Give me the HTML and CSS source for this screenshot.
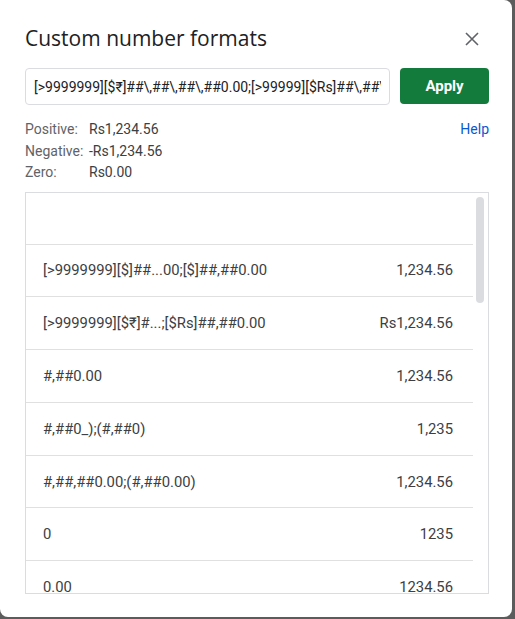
FILE: index.html
```html
<!DOCTYPE html>
<html>
<head>
<meta charset="utf-8">
<link rel="stylesheet" href="styles.css">
</head>
<body>
<div class="dialog">
  <div class="header">
    <div class="title">Custom number formats</div>
    <svg class="close" width="14" height="14" viewBox="0 0 14 14"><path d="M1 1L13 13M13 1L1 13" stroke="#5f6368" stroke-width="1.6" fill="none"/></svg>
  </div>
  <div class="inputrow">
    <div class="input"><span>[&gt;9999999][$₹]##\,##\,##\,##0.00;[&gt;99999][$Rs]##\,##\,##0.00;[$Rs]##,##0.00</span></div>
    <div class="apply">Apply</div>
  </div>
  <div class="preview">
    <div class="plines">
      <div class="pline"><span class="lab">Positive:</span><span class="val">Rs1,234.56</span></div>
      <div class="pline"><span class="lab">Negative:</span><span class="val">-Rs1,234.56</span></div>
      <div class="pline"><span class="lab">Zero:</span><span class="val">Rs0.00</span></div>
    </div>
    <div class="help">Help</div>
  </div>
  <div class="list">
    <div class="rows">
      <div class="row first"></div>
      <div class="row"><span>[&gt;9999999][$]##...00;[$]##,##0.00</span><span>1,234.56</span></div>
      <div class="row"><span>[&gt;9999999][$₹]#...;[$Rs]##,##0.00</span><span>Rs1,234.56</span></div>
      <div class="row"><span>#,##0.00</span><span>1,234.56</span></div>
      <div class="row"><span>#,##0_);(#,##0)</span><span>1,235</span></div>
      <div class="row"><span>#,##,##0.00;(#,##0.00)</span><span>1,234.56</span></div>
      <div class="row"><span>0</span><span>1235</span></div>
      <div class="row"><span>0.00</span><span>1234.56</span></div>
    </div>
    <div class="track"><div class="thumb"></div></div>
  </div>
</div>
</body>
</html>
```
FILE: styles.css
```css
html, body {
  margin: 0;
  padding: 0;
  background: #5c5c5c;
  width: 515px;
  height: 619px;
  overflow: hidden;
}
.dialog {
  width: 512px;
  height: 617px;
  background: #ffffff;
  border-radius: 0 8px 8px 8px;
  box-sizing: border-box;
  padding: 24px 23px 0 25px;
  font-family: Roboto, "Liberation Sans", sans-serif;
  color: #3c4043;
}
.header {
  display: flex;
  justify-content: space-between;
  align-items: center;
  height: 28px;
}
.title {
  font-family: "Open Sans", Roboto, sans-serif;
  font-size: 21px;
  color: #202124;
}
.close {
  margin-right: 10px;
  margin-top: 2px;
}
.inputrow {
  display: flex;
  gap: 10px;
  margin-top: 16px;
  height: 37px;
}
.input {
  width: 365px;
  box-sizing: border-box;
  border: 1px solid #dadce0;
  border-radius: 4px;
  padding: 0 8px;
  display: flex;
  align-items: center;
  overflow: hidden;
  white-space: nowrap;
  font-size: 14px;
  color: #202124;
}
.input span { overflow: hidden; display: block; width: 100%; }
.apply {
  width: 89px;
  background: #137b3b;
  border-radius: 4px;
  color: #fff;
  font-weight: 700;
  font-size: 15px;
  display: flex;
  align-items: center;
  justify-content: center;
  height: 36px;
}
.preview {
  display: flex;
  justify-content: space-between;
  margin-top: 14px;
}
.pline {
  display: flex;
  font-size: 14px;
  height: 21.5px;
  line-height: 21.5px;
}
.lab { width: 64px; color: #5f6368; }
.val { color: #3c4043; }
.help {
  color: #0b57d0;
  font-size: 14px;
  line-height: 21.5px;
}
.list {
  margin-top: 8px;
  height: 402px;
  box-sizing: border-box;
  border: 1px solid #dadce0;
  display: flex;
  overflow: hidden;
}
.rows {
  width: 447px;
  flex: none;
}
.row {
  height: 52.8px;
  box-sizing: border-box;
  border-bottom: 1px solid #e0e0e0;
  display: flex;
  justify-content: space-between;
  align-items: center;
  padding: 0 20px 0 17px;
  font-size: 14.8px;
  color: #3c4043;
  white-space: nowrap;
}
.row.first { height: 52px; }
.track {
  flex: 1;
  padding: 4px 0 0 3px;
}
.thumb {
  width: 8px;
  height: 106px;
  border-radius: 4px;
  background: #dadce0;
}
```
